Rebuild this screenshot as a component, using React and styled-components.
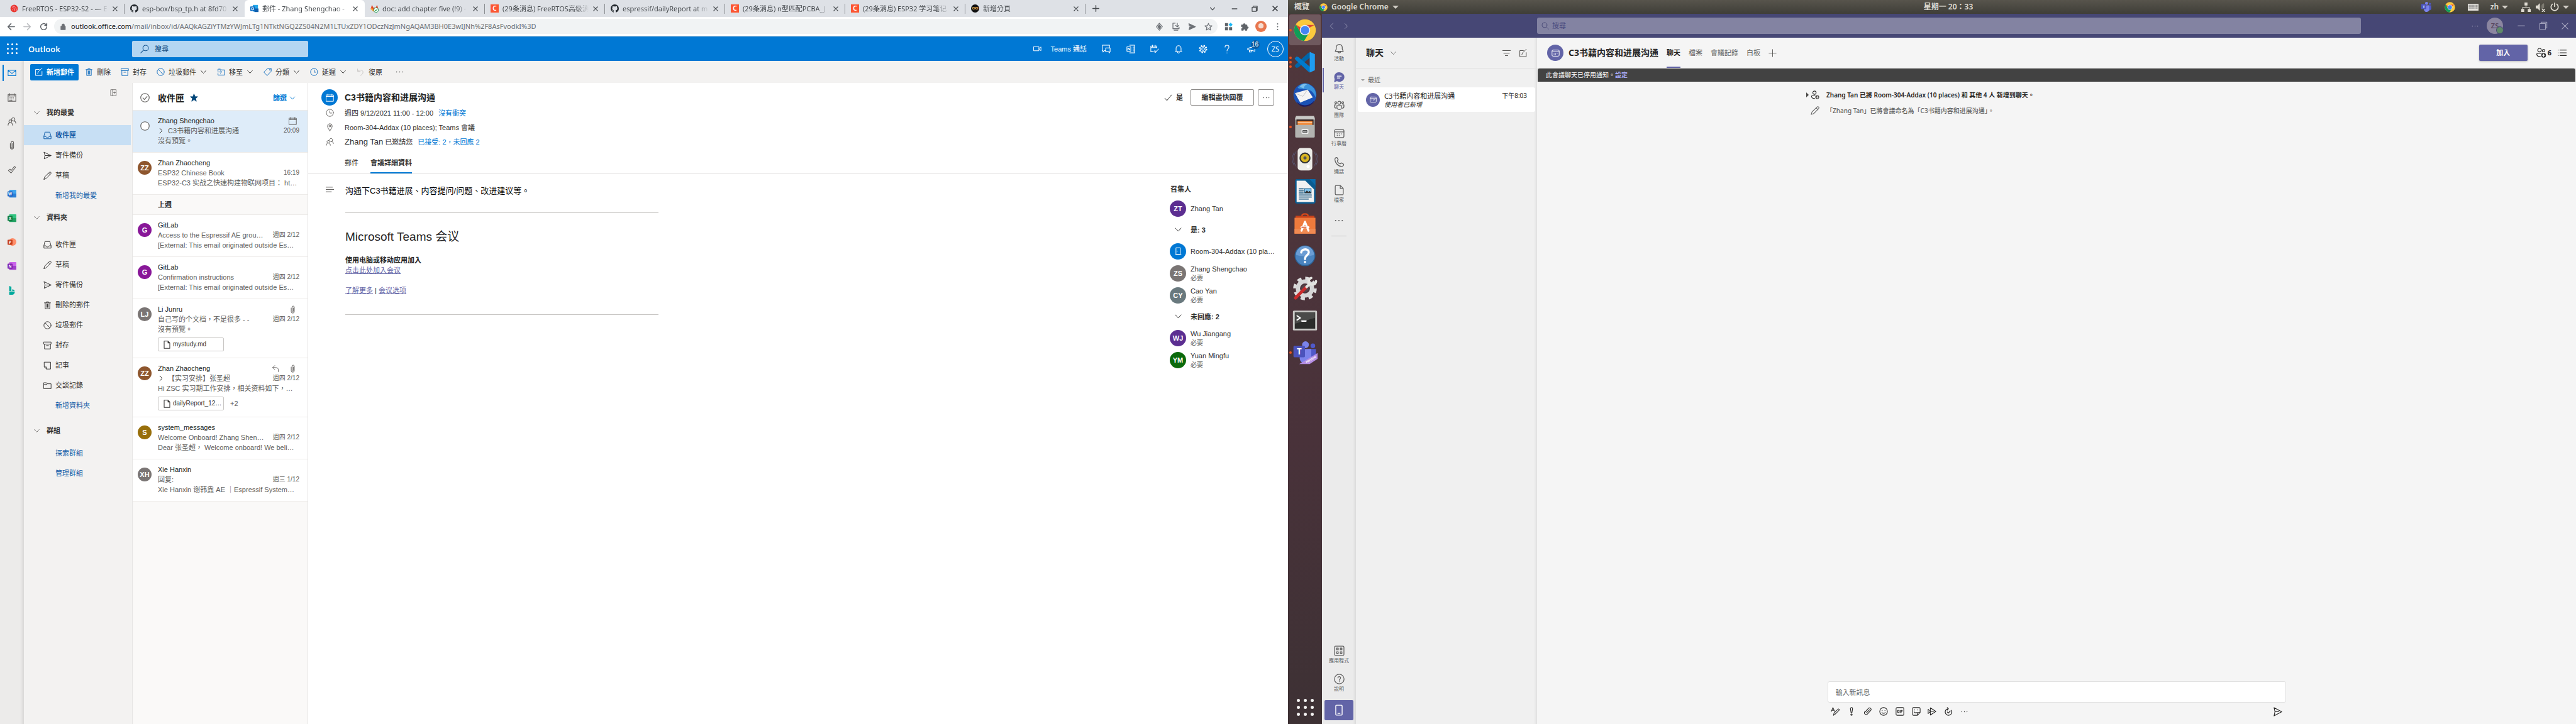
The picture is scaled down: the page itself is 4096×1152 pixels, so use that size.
import React from "react";
import styled, { createGlobalStyle, css } from "styled-components";

const segoe = '"Liberation Sans", "Noto Sans CJK TC", sans-serif';
const ubuntu = '"Noto Sans", "Noto Sans CJK TC", sans-serif';

const Global = createGlobalStyle`
  * { box-sizing: border-box; }
  body { margin: 0; background: #fff; }
  button, input { font: inherit; color: inherit; border: 0; background: none; padding: 0; margin: 0; }
  ul, h1, h2, h3, p { margin: 0; padding: 0; list-style: none; font-weight: inherit; font-size: inherit; }
  a { color: inherit; text-decoration: none; }
`;

/* ---------- icons ---------- */

const Svg = styled.svg`
  width: ${(p) => p.$s || 13}px;
  height: ${(p) => p.$s || 13}px;
  flex: none;
  display: block;
  fill: none;
  stroke: currentColor;
  stroke-width: ${(p) => p.$w || 1.2};
  stroke-linecap: round;
  stroke-linejoin: round;
  color: ${(p) => p.$c || "inherit"};
`;

const shapes = {
  mail: <path d="M1 3h14v10H1zM1 3.5l7 5.5 7-5.5" />,
  calendar: <path d="M1 2.5h14v12.5H1zM1 5.5h14M4 1v3M12 1v3M4 8h1M7 8h1M10 8h1M4 10.5h1M7 10.5h1M10 10.5h1M4 13h1M7 13h1" />,
  cal: <path d="M1 2.5h14V15H1zM1 5.5h14M4 1v3M12 1v3" />,
  people: <path d="M10.5 7.5a3 3 0 1 0-.1 0c2.500 0 4.600 1.500 4.600 4M5 10.500a2.500 2.500 0 1 0-.1 0C2.500 10.500 1 12.500 1 15M5 10.500c2.500 0 4 2 4 4.500" />,
  clip: <path d="M5 5v7a3 3 0 0 0 6 0V3.500a2.200 2.200 0 0 0-4.400 0V11.500a1.200 1.200 0 0 0 2.400 0V5" />,
  todo: <path d="M1.500 9.500l3-2.500 2 2.500L12.500 2l2 1.500L6.500 14z" />,
  collapse: <path d="M2 1h12v14H2zM6 1v14M8 8h5M10 6v4" />,
  chevron: <path d="M2.500 5l5.500 6 5.500-6" />,
  next: <path d="M5 2l6 6-6 6" />,
  prev: <path d="M11 1.500L4.500 8l6.500 6.500" />,
  inbox: <path d="M3.500 1.500h9L15 10v4.500H1V10zM1 10h4c0 3 6 3 6 0h4" />,
  sent: <path d="M1.500 1.500L15 8 1.500 14.500 3 8zM3 8h12" />,
  pencil: <path d="M1 15l1.500-4.500L11.500 1.500a1.800 1.800 0 0 1 3 2.800L5.500 13.500zM10 3l3 3" />,
  trash: <path d="M3.500 3.500V15h9V3.500M2 3.500h12M6 3.500V1.500h4v2M6.500 6v6.500M9.500 6v6.500M8 6v6.500" />,
  junk: <><circle cx="8" cy="8" r="7" /><path d="M3.200 3l9.600 10" /></>,
  archive: <path d="M1 1.500h14v4H1zM2.200 5.500V15h11.600V5.500M6 8.500h4" />,
  note: <path d="M2 1.500h12V15H6L2 11zM2 11h4v4" />,
  folder: <path d="M1 2.500h5l1.500 2H15V14H1zM1 6h5.500l1-1.500" />,
  compose: <path d="M14.500 7v8H2V3h7M6 11l1-3 7.500-7.500" />,
  move: <path d="M5 2.500H2v3M2 11v3h13V4H8.500L7 2.500H5M1 8h8M6.500 5.500L9 8l-2.500 2.500" />,
  tag: <><path d="M8.500 1H15v5.500L7 15 1 8.800z" /><circle cx="12.200" cy="3.800" r=".7" /></>,
  clock: <><circle cx="8" cy="8" r="7" /><path d="M8 4v4.500h3.500" /></>,
  undo: <path d="M2 2v5h5M2.500 6.500C6 3 12 3.500 12.500 8c.300 3-2 5-4.500 7" />,
  reply: <path d="M6 2L2 6l4 4M2 6h6c4 0 6 3 5 8" />,
  dots: <path strokeWidth="2" d="M2 8h.01M8 8h.01M14 8h.01" />,
  vdots: <path strokeWidth="2.400" d="M8 2.500v.01M8 8v.01M8 13.500v.01" />,
  check: <path d="M1.500 9l4 4.500L14.500 2.500" />,
  checkCircle: <><circle cx="8" cy="8" r="7.200" /><path d="M4.500 8.500l2.500 2.500 4.500-5" /></>,
  circle: <circle cx="8" cy="8" r="7.200" fill="#fff" />,
  star: <path fill="currentColor" d="M8 1l2 5h5l-4 3.300L12.500 15 8 11.500 3.500 15 5 9.300 1 6h5z" />,
  starLine: <path d="M8 1.500l1.900 4.600 4.900.3-3.800 3.200 1.200 4.900L8 11.900l-4.200 2.600L5 9.600 1.200 6.400l4.900-.3z" />,
  pin: <><path d="M8 15C5 10.500 3.500 8.500 3.500 5.500a4.500 4.500 0 0 1 9 0C12.500 8.500 11 10.500 8 15z" /><circle cx="8" cy="5.500" r="1.800" /></>,
  lines: <path d="M0 3.500h13M0 8h16M0 12.500h11" />,
  search: <><circle cx="9.800" cy="6.200" r="5" /><path d="M6.200 9.800L1 15" /></>,
  searchR: <><circle cx="6.500" cy="6.500" r="5.300" /><path d="M10.500 10.500L15 15" /></>,
  video: <path d="M1 4h10v8H1zM11 8l4-3.500v7z" />,
  chat: <path d="M7 11H4.500L2 13.500V11H1V1h13v4M7 6h8v7h-1v2l-2-2H7z" />,
  onenote: <path d="M6 1h9v14H6M1 4h7v8H1zM3 10V6l3 4V6M15 4.500h-3M15 8h-3M15 11.500h-3" />,
  calCheck: <path d="M12 6V2.500H1V13h4M1 5.500h11M4 1v3M9 1v3M6.500 12l2.500 2.500L15 8M8 10.500l1.500 1.500" />,
  bell: <path d="M2 12.500h12M3.500 12.500V6.500a4.500 4.500 0 0 1 9 0v6M6.500 12.500a1.500 1.500 0 0 0 3 2" />,
  gear: <><circle cx="8" cy="8" r="2.500" /><circle cx="8" cy="8" r="5" /><circle cx="8" cy="8" r="6.500" strokeDasharray="2.600 2.500" strokeWidth="2" strokeLinecap="butt" /></>,
  question: <path d="M4.500 4.500C4.500 0 11.500 0 11.500 4.500 11.500 7.500 8 7.500 8 11.500M8 15v.01" />,
  megaphone: <path d="M1 7l13-4v9L1 9zM4 10v3.500h3.500V11" />,
  door: <><path d="M4 1.500h8v13H4zM2.500 14.500h11" /><path d="M6 8v.5" /></>,
  file: <path d="M2.500 1H10l3.500 3.500V15h-11zM10 1v3.500h3.500" />,
  back: <path d="M15 8H2M8 2L2 8l6 6" />,
  forward: <path d="M1 8h13M8 2l6 6-6 6" />,
  reload: <path d="M14 8A6 6 0 1 1 12 3.500L14 5.500M14 1.500v4h-4" />,
  lock: <path fill="currentColor" d="M3 7h10v8H3zM5 7V4.500a3 3 0 0 1 6 0V7" />,
  close: <path d="M3 3l10 10M13 3L3 13" />,
  plus: <path d="M8 1v14M1 8h14" />,
  minus: <path d="M2 8h12" />,
  restore: <path d="M1.500 4h10.500v10.500H1.500zM4 4V1.500h10.500V12H12" />,
  eye: <><path d="M8 1l6 7-6 7-6-7z" /><path fill="currentColor" d="M8 4l3 4-3 4-3-4z" /></>,
  install: <path d="M7 1H2.500v11h12V9M5 15h7M11 1v7M8 5.500L11 8.500l3-3" />,
  plane: <path fill="currentColor" d="M2 2l13 6-13 6 1-5 6-1-6-1z" />,
  puzzle: <path fill="currentColor" d="M1.500 4.500h3.500C4 1 9 1 8.500 4.500H12V8c3.500-.8 3.500 4 0 3.500V15H8.500c0-3-3.500-3-3.500 0H1.500v-3.500c3 0 3-3.500 0-3.500z" />,
  tbell: <path d="M2 12h12L12.500 8.500V6a4.500 4.500 0 0 0-9 0v2.500zM6 12.200a2 2 0 0 0 4 0" />,
  tchat: <><path fill="currentColor" d="M8 1.500a7 6.500 0 1 1-3.500 12.100L1 15l.8-4A6.500 6.500 0 0 1 8 1.500z" /><path stroke="#fff" d="M5 6.800h6M5 9.500h4" /></>,
  teams: <><circle cx="8" cy="4.300" r="2.300" /><circle cx="2.800" cy="4" r="1.400" /><circle cx="13.200" cy="4" r="1.400" /><path d="M4.500 8.500h7V11a3.500 3.500 0 0 1-7 0zM2.800 7.500H1V10a2.500 2.500 0 0 0 2.200 2.400M13.200 7.500H15V10a2.500 2.500 0 0 1-2.200 2.400" /></>,
  tcal: <><rect x="1" y="2" width="14" height="12" rx="2" /><path d="M1 5.500h14" /><path strokeWidth="1.500" d="M5 8.500h.01M8 8.500h.01M11 8.500h.01M5 11h.01M8 11h.01" /></>,
  phone: <path d="M4.500 1.500L6.500 5 5 6.500c.5 2 2.500 4 4.500 4.500L11 9.500l3.500 2c.5 1.500-1 3.500-3 3.500C6 14.500 1.500 9 1.500 4.500c0-2 1.500-3.300 3-3z" />,
  tfile: <path d="M4 1h5.500L14 5.500V13.500a1.500 1.500 0 0 1-1.500 1.500h-9A1.500 1.500 0 0 1 2 13.500v-11A1.500 1.500 0 0 1 3.500 1zM9.500 1v4.500H14" />,
  apps: <><rect x="1" y="1" width="14" height="14" rx="1.500" /><path d="M4 4h2.500v2.500H4zM9.500 4H12v2.500H9.500zM4 9.500h2.500V12H4zM9.500 9.500H12V12H9.500z" /></>,
  help: <><circle cx="8" cy="8" r="7.200" /><path d="M6 6.300C6 3.500 10.200 3.800 10 6.300 9.900 8 8 8 8 9.800M8 12v.01" /></>,
  mobile: <><rect x="3.500" y="1" width="9" height="14" rx="1" /><path d="M6.500 12.500h3" /></>,
  filter: <path d="M0 3h16M2.500 8h11M5.500 13h5" />,
  addPerson: <><circle cx="7" cy="4" r="3" /><path d="M8 9.500H2.500C1 9.500 1 15 7.500 14.500" /><circle cx="12" cy="12" r="3.500" fill="#484644" stroke="none" /><path stroke="#fff" d="M12 10.200v3.600M10.200 12h3.600" /></>,
  addPeople: <><circle cx="5" cy="3.800" r="2.800" /><circle cx="11.500" cy="4.500" r="2" /><path d="M8 9H1.500C0 9 0 14.500 6.500 14" /><circle cx="11.500" cy="12" r="3.800" fill="#333" stroke="none" /><path stroke="#fff" d="M11.500 10v4M9.500 12h4" /></>,
  list: <path d="M1 3h.01M1 8h.01M1 13h.01M4 3h12M4 8h12M4 13h12" />,
  format: <path d="M1 8L4 1l3 7M2 6h4M5 15l1-4 7-7a1.400 1.400 0 0 1 2 2l-7 7z" />,
  bang: <><path d="M6 3a2 2 0 0 1 4 0L8.800 10.500H7.200z" /><circle cx="8" cy="13.800" r="1.300" /></>,
  attach: <path d="M3 9l6-6.500a2.800 2.800 0 0 1 4 4L7 13a3.200 3.200 0 0 1-4.500-4.500M5.500 10.500L11 5" />,
  smile: <><circle cx="8" cy="8" r="7" /><path d="M5.500 6v.5M10.500 6v.5M5 10c1.500 2 4.500 2 6 0" /></>,
  gif: <><rect x="1" y="1" width="14" height="14" rx="2" /><path d="M6 6H4v4h2V8M8.200 6v4M10.200 10V6h2.300M10.200 8h2" /></>,
  sticker: <path d="M3 1h10a2 2 0 0 1 2 2v7l-5 5H3a2 2 0 0 1-2-2V3a2 2 0 0 1 2-2zM10 15v-5h5M5 5v.5M10.500 5v.5M4.500 9c1 1.500 3 1.800 4.500 1" />,
  stream: <path d="M5 1.500L15 8 5 14.500V8zM1 4l4 4-4 4zM5 8h6" />,
  loop: <path strokeWidth="1.400" d="M8 3a6 6 0 1 0 5.500 3M8 3l-2-2M8 3L6 5.500M6 9l2 2 3.500-4" />,
  sendT: <path d="M2 1l13 7-13 7 1.500-7zM3.500 8H10" />,
};

const Icon = ({ name, size, color, weight }) => (
  <Svg viewBox="0 0 16 16" $s={size} $c={color} $w={weight} aria-hidden="true">{shapes[name]}</Svg>
);

const ChromeLogo = ({ size }) => (
  <Svg viewBox="0 0 48 48" $s={size} style={{ stroke: "none" }}>
    <circle cx="24" cy="24" r="23" fill="#fbc93d" />
    <path fill="#da4437" d="M24 24L4.500 12A23 23 0 0 1 44.200 13z M24 13h20.200A23 23 0 0 0 4.500 12l10 17z" />
    <path fill="#109d58" d="M4.500 12A23 23 0 0 0 22 47L33 29 14.500 29z" />
    <circle cx="24" cy="24" r="11" fill="#f1f1f1" />
    <circle cx="24" cy="24" r="9" fill="#4385f4" />
  </Svg>
);

const TeamsLogo = ({ size, preview }) => (
  <Svg viewBox="0 0 48 48" $s={size} style={{ stroke: "none" }}>
    <circle cx="25" cy="9" r="6.500" fill="#7b83eb" />
    <circle cx="39" cy="11" r="4.500" fill="#5059c9" />
    <path fill="#5059c9" d="M30 17h15v14a8 8 0 0 1-13 6z" />
    <path fill="#7b83eb" d="M14 17h22v16a11 11 0 0 1-22 3z" />
    <rect x="2" y="11" width="22" height="22" rx="2" fill="#4b53bc" />
    <text x="13" y="28" fontSize="16" fontWeight="bold" textAnchor="middle" fill="#fff" fontFamily="Noto Sans">T</text>
    {preview && <path fill="#b48ee3" d="M13 46L48 25v11L33 46z" />}
    {preview && <text transform="translate(27 44.500) rotate(-31)" fontSize="5" fontWeight="bold" fill="#fff" fontFamily="Noto Sans">PREVIEW</text>}
  </Svg>
);

const dockArt = {
  chrome: <ChromeLogo size={36} />,
  vscode: (
    <Svg viewBox="0 0 48 48" $s={36} style={{ stroke: "none" }}>
      <path fill="#0065a9" d="M34 3l-4 2L4 29l-2 3 4 4 4-1 26-22z" />
      <path fill="#007acc" d="M34 45l-4-2L4 19l-2-3 4-4 4 1 26 22z" />
      <path fill="#1f9cf0" d="M34 2l11 5v34l-11 5z" />
    </Svg>
  ),
  thunderbird: (
    <Svg viewBox="0 0 48 48" $s={40} style={{ stroke: "none" }}>
      <circle cx="24" cy="25" r="22" fill="#1b52b5" />
      <path fill="#1f1c5e" d="M8 38c8 8 22 11 34-2-4 12-26 18-34 2z" />
      <path fill="#f4f4f4" d="M5 22l24-7 10 15-24 10z" />
      <path fill="none" stroke="#bbb" strokeWidth="1" d="M5 22l15 6 9-13" />
      <path fill="#3b93dc" d="M10 12C14 3 28 0 36 8c8 5 10 14 8 22-3-9-8-14-16-15-5-1-10 0-18-3z" />
      <path fill="#7cc0ec" d="M14 10c3-5 9-7 14-5-4 1-6 4-6 8z" />
    </Svg>
  ),
  files: (
    <Svg viewBox="0 0 48 48" $s={38} style={{ stroke: "none" }}>
      <rect x="4" y="4" width="40" height="41" rx="2" fill="#8b8b88" />
      <path fill="#c9c9c6" d="M6 2h36l2 7H4z" />
      <rect x="7" y="9" width="34" height="12" fill="#322" />
      <path fill="#f08b3c" d="M9 12h30v9H9z" />
      <path stroke="#fff" strokeWidth="1" d="M10 15h28" />
      <rect x="5" y="20" width="38" height="25" rx="1" fill="#b3b3b0" />
      <rect x="17" y="28" width="14" height="10" rx="2" fill="#eee" />
      <rect x="20" y="31" width="8" height="4" fill="#999" stroke="#444" />
    </Svg>
  ),
  music: (
    <Svg viewBox="0 0 48 48" $s={40} style={{ stroke: "none" }}>
      <g fill="none" stroke="#5a5f80" strokeWidth="1">
        <path d="M7 10a22 22 0 0 0 0 28M3 12a24 24 0 0 0 0 24M41 10a22 22 0 0 1 0 28M45 12a24 24 0 0 1 0 24" />
      </g>
      <rect x="10" y="3" width="28" height="43" rx="6" fill="#ecece8" />
      <circle cx="24" cy="22" r="10.500" fill="#333" />
      <circle cx="24" cy="22" r="8" fill="#d9b521" />
      <circle cx="24" cy="22" r="3" fill="#555" />
      <circle cx="30" cy="38" r="3" fill="#fff" />
    </Svg>
  ),
  writer: (
    <Svg viewBox="0 0 48 48" $s={39} style={{ stroke: "none" }}>
      <path fill="#0a5c91" d="M6 0h26l12 13v31a4 4 0 0 1-4 4H8a4 4 0 0 1-4-4V3z" />
      <path fill="#f2f2f2" d="M7 3h17l17 17v25H7z" />
      <path fill="#0a6cab" d="M32 0h12v13z" />
      <path stroke="#0b4d78" strokeWidth="2" d="M12 19h8M12 23h8M12 27h8M12 31h24M12 35h24M12 39h18" />
      <path fill="#0b4d78" d="M22 18h14v10H22z" />
      <path fill="#7ec4ee" d="M23 19h12v6H23z" />
      <path fill="#333" d="M23 27l4-5 3 3 3-2 2 4z" />
    </Svg>
  ),
  software: (
    <Svg viewBox="0 0 48 48" $s={38} style={{ stroke: "none" }}>
      <path fill="none" stroke="#d4481a" strokeWidth="3" d="M18 16V8c0-5 12-5 12 0v8" />
      <path fill="#c8421a" d="M5 8h38v6H5z" />
      <path fill="#ef7a3c" d="M3 12h42v32H3z" />
      <path fill="#f08a52" d="M3 34h42v10H3z" />
      <path stroke="#fff" strokeWidth="4" d="M17 38l7-18 7 18" fill="none" />
      <rect x="15" y="29" width="18" height="4" rx="2" fill="#fff" />
      <rect x="17" y="30" width="10" height="2" fill="#d4481a" />
    </Svg>
  ),
  help: (
    <Svg viewBox="0 0 48 48" $s={36} style={{ stroke: "none" }}>
      <circle cx="24" cy="24" r="21" fill="#4a84bf" stroke="#2c5f90" strokeWidth="2" />
      <path fill="#6b9dd4" d="M5 22a19 19 0 0 1 38 0c-12 4-26 4-38 0z" />
      <path fill="none" stroke="#fff" strokeWidth="4.500" d="M16 17c1-9 17-9 16 0-.5 6-8 6-8 14M24 37v.5" />
    </Svg>
  ),
  settings: (
    <Svg viewBox="0 0 48 48" $s={40} style={{ stroke: "none" }}>
      <circle cx="24" cy="24" r="19.500" fill="none" stroke="#ddd" strokeWidth="6" strokeDasharray="8 7.300" strokeLinecap="butt" />
      <circle cx="24" cy="24" r="13.500" fill="none" stroke="#d6d6d6" strokeWidth="8" />
      <circle cx="24" cy="24" r="7" fill="#574549" />
      <path stroke="#c92c2c" strokeWidth="6" d="M6 42L26 22" />
      <path stroke="#e4e4e0" strokeWidth="5" d="M27 21l6-6" />
      <path fill="none" stroke="#e4e4e0" strokeWidth="4.500" d="M36 4c-6 2-7 10-1 12 5 2 10-1 10-6" />
    </Svg>
  ),
  terminal: (
    <Svg viewBox="0 0 48 48" $s={40} style={{ stroke: "none" }}>
      <rect x="1" y="5" width="46" height="38" rx="2" fill="#c8c8c5" />
      <rect x="4.500" y="8.500" width="39" height="31" fill="#2b2c2a" />
      <path fill="#4a4b49" d="M5 9h38v10L5 30z" />
      <path fill="none" stroke="#fff" strokeWidth="2.500" d="M9 15l6 4-6 4M18 25h8" />
    </Svg>
  ),
  teams: <TeamsLogo size={40} preview />,
};

/* ---------- desktop ---------- */

const Desktop = styled.div`
  display: grid;
  grid-template-columns: 1fr 1fr;
  min-height: 100vh;
  font-family: ${segoe};
`;
const Column = styled.div`
  display: flex;
  flex-direction: column;
  min-width: 0;
`;
const Row = styled.div`
  display: flex;
  align-items: ${(p) => p.$align || "center"};
  gap: ${(p) => p.$gap || 0}px;
`;
const Spacer = styled.div`
  flex: 1;
`;
const Disc = styled.span`
  display: flex;
  flex: none;
  align-items: center;
  justify-content: center;
  width: ${(p) => p.$d}px;
  height: ${(p) => p.$d}px;
  border-radius: 50%;
  background: ${(p) => p.$bg};
  color: #fff;
  font-weight: 700;
  font-size: 11px;
  line-height: 16px;
`;

/* ---------- browser ---------- */

const TabStrip = styled.div`
  display: flex;
  align-items: center;
  height: 27px;
  padding: 0 5px 0 7px;
  background: #dee1e6;
  font: 11px/16px ${ubuntu};
  color: #45494d;
`;
const Tab = styled.div`
  display: flex;
  align-items: center;
  align-self: stretch;
  gap: 6px;
  width: 191px;
  padding: 0 10px 0 9px;
  position: relative;
  ${(p) =>
    p.$active
      ? css`background: #fff; border-radius: 6px 6px 0 0;`
      : css`
          &::after {
            content: "";
            position: absolute;
            right: 0;
            top: 6px;
            height: 16px;
            width: 1px;
            background: ${p.$plain ? "transparent" : "#8a8d91"};
          }
        `}
`;
const TabTitle = styled.span`
  flex: 1;
  overflow: hidden;
  white-space: nowrap;
  mask-image: linear-gradient(90deg, #000 85%, transparent);
`;
const Favicon = styled.span`
  display: flex;
  flex: none;
  align-items: center;
  justify-content: center;
  width: 13px;
  height: 13px;
  border-radius: ${(p) => p.$r || 0}px;
  background: ${(p) => p.$bg || "none"};
  color: ${(p) => p.$ink || "#fff"};
  font-size: 10px;
  line-height: 13px;
  font-weight: 600;
`;
const IconButton = styled.button`
  display: flex;
  flex: none;
  align-items: center;
  justify-content: center;
  width: ${(p) => p.$w || 26}px;
  height: 24px;
`;
const AddressBar = styled.div`
  display: flex;
  align-items: center;
  height: 31px;
  padding: 0 4px;
  border-bottom: 1px solid #d8dadd;
  background: #fff;
  color: #5f6368;
`;
const UrlBox = styled.div`
  display: flex;
  align-items: center;
  flex: 1;
  height: 24px;
  margin: 0 4px;
  padding: 0 2px 0 9px;
  border-radius: 12px;
  background: #f1f3f4;
  font: 11px/16px ${ubuntu};
  color: #6c7075;
  white-space: nowrap;
`;
const Url = styled.a`
  flex: 1;
  margin-left: 7px;
  b { font-weight: 400; color: #202124; }
`;
const Face = styled.span`
  width: 18px;
  height: 18px;
  border-radius: 50%;
  background: radial-gradient(circle at 50% 45%, #f7ddd0 0 30%, #e8774f 34%);
  margin: 0 4px;
`;

const GithubMark = () => (
  <Svg viewBox="0 0 16 16" style={{ stroke: "none" }}>
    <path fill="#24292e" d="M8 0C3.580 0 0 3.580 0 8c0 3.540 2.290 6.530 5.470 7.590.4.070.55-.17.55-.38v-1.490c-2.230.480-2.690-.940-2.690-.940-.36-.92-.89-1.170-.89-1.170-.73-.5.050-.49.050-.49.8.060 1.230.830 1.230.830.710 1.230 1.870.870 2.330.660.070-.52.280-.87.510-1.070-1.780-.2-3.640-.89-3.640-3.950 0-.87.310-1.590.820-2.150-.08-.2-.36-1.020.080-2.120 0 0 .67-.21 2.200.820a7.600 7.600 0 0 1 4 0c1.530-1.040 2.200-.82 2.200-.82.440 1.100.160 1.920.080 2.120.510.560.820 1.270.820 2.150 0 3.070-1.870 3.750-3.650 3.950.290.250.540.730.540 1.480v2.200c0 .21.150.460.550.380A8 8 0 0 0 16 8c0-4.420-3.580-8-8-8z" />
  </Svg>
);
const GitlabMark = () => (
  <Svg viewBox="0 0 16 16" style={{ stroke: "none" }}>
    <path fill="#e24329" d="M3 1l2.500 5h5L13 1l2.500 8L8 15 .5 9z" />
    <path fill="#fca326" d="M.5 9L3 6l5 9z" />
    <circle cx="11" cy="11" r="4.500" fill="#fff" stroke="#2da160" />
    <path fill="none" stroke="#2da160" strokeWidth="1.300" d="M9 11l1.500 1.500 3-3" />
  </Svg>
);
const EspMark = () => (
  <Svg viewBox="0 0 16 16" $w={1.5} $c="#e8362d">
    <circle cx="8" cy="8" r="6.500" fill="#e8362d" />
    <path stroke="#fbd" strokeWidth="1" d="M5 3.500c4 0 7.500 3.500 7.500 8M4.500 6.500c3 0 5 2 5 5.500M5 10v1" />
  </Svg>
);
const OutlookMark = () => (
  <Svg viewBox="0 0 16 16" style={{ stroke: "none" }}>
    <path fill="#28a8ea" d="M5 1h10v13H5z" />
    <path fill="#0f5fae" d="M8 8h8v7H8z" />
    <rect x="0" y="4" width="9" height="9" rx="1" fill="#0a6cc4" />
    <circle cx="4.500" cy="8.500" r="2.300" fill="none" stroke="#fff" strokeWidth="1.300" />
  </Svg>
);

const tabs = [
  { icon: <EspMark />, title: "FreeRTOS - ESP32-S2 - — E" },
  { icon: <GithubMark />, title: "esp-box/bsp_tp.h at 8fd70", plain: true },
  { icon: <OutlookMark />, title: "郵件 - Zhang Shengchao -", active: true },
  { icon: <GitlabMark />, title: "doc: add chapter five (!9) ·" },
  { icon: <Favicon $bg="#fc5531">C</Favicon>, title: "(29条消息) FreeRTOS高级消" },
  { icon: <GithubMark />, title: "espressif/dailyReport at m" },
  { icon: <Favicon $bg="#fc5531">C</Favicon>, title: "(29条消息) n型匹配PCBA_J" },
  { icon: <Favicon $bg="#fc5531">C</Favicon>, title: "(29条消息) ESP32 学习笔记" },
  { icon: <Favicon $bg="#111" $r={7} $ink="#f0b050">∞</Favicon>, title: "新增分頁" },
];

const Browser = () => (
  <>
    <TabStrip>
      {tabs.map((t) => (
        <Tab key={t.title} $active={t.active} $plain={t.plain}>
          {t.icon}
          <TabTitle>{t.title}</TabTitle>
          <Icon name="close" size={10} weight={2.2} />
        </Tab>
      ))}
      <IconButton $w={32} aria-label="new tab"><Icon name="plus" size={11} weight={2} /></IconButton>
      <Spacer />
      <IconButton $w={38} aria-label="tab search"><Icon name="chevron" size={10} weight={2} /></IconButton>
      <IconButton $w={32} aria-label="minimize"><Icon name="minus" size={10} weight={2.4} /></IconButton>
      <IconButton $w={32} aria-label="restore"><Icon name="restore" size={10} weight={2} /></IconButton>
      <IconButton $w={32} aria-label="close"><Icon name="close" size={11} weight={2.4} /></IconButton>
    </TabStrip>
    <AddressBar>
      <IconButton aria-label="back"><Icon name="back" weight={1.8} /></IconButton>
      <IconButton aria-label="forward"><Icon name="forward" weight={1.8} color="#bbbdc0" /></IconButton>
      <IconButton aria-label="reload"><Icon name="reload" weight={1.8} /></IconButton>
      <UrlBox>
        <Icon name="lock" size={11} />
        <Url href="#mail">
          <b>outlook.office.com</b>/mail/inbox/id/AAQkAGZiYTMzYWJmLTg1NTktNGQ2ZS04N2M1LTUxZDY1ODczNzJmNgAQAM3BH0E3wIJNh%2F8AsFvodkI%3D
        </Url>
        <IconButton aria-label="view"><Icon name="eye" weight={1.4} /></IconButton>
        <IconButton aria-label="install"><Icon name="install" weight={1.6} /></IconButton>
        <IconButton aria-label="share"><Icon name="plane" /></IconButton>
        <IconButton aria-label="bookmark"><Icon name="starLine" weight={1.5} /></IconButton>
      </UrlBox>
      <IconButton aria-label="apps">
        <Svg viewBox="0 0 16 16" style={{ stroke: "none" }}>
          <path fill="#5f6368" d="M1 1h6v6H1zM1 9h6v6H1zM9 9h6v6H9z" />
          <path fill="#1cb8f5" d="M12 0l4 4-4 4-4-4z" />
        </Svg>
      </IconButton>
      <IconButton aria-label="extensions"><Icon name="puzzle" /></IconButton>
      <Face />
      <IconButton aria-label="menu"><Icon name="vdots" /></IconButton>
    </AddressBar>
  </>
);

/* ---------- outlook ---------- */

const SuiteBar = styled.header`
  display: flex;
  align-items: center;
  height: 39px;
  background: #0078d4;
  color: #fff;
  font-size: 11px;
  line-height: 16px;
`;
const Brand = styled.a`
  width: 165px;
  font: 600 13px/20px "Open Sans", sans-serif;
`;
const Waffle = styled.button`
  display: grid;
  grid-template-columns: repeat(3, 3px);
  gap: 4px;
  margin: 0 17px 0 11px;
  i { width: 3px; height: 3px; border-radius: 50%; background: currentColor; }
`;
const SearchBox = styled.label`
  display: flex;
  align-items: center;
  gap: 9px;
  width: 280px;
  height: 26px;
  padding-left: 13px;
  border-radius: 2px;
  background: #b3d6f2;
  color: #10508c;
  input { flex: 1; min-width: 0; outline: 0; }
  input::placeholder { color: #104a7d; opacity: 1; }
`;
const SuiteIcons = styled.div`
  display: grid;
  grid-template-columns: repeat(7, 1fr);
  width: 269px;
  margin-left: 12px;
`;
const SuiteButton = styled.button`
  display: flex;
  justify-content: center;
  position: relative;
`;
const Badge = styled.span`
  position: absolute;
  left: 18px;
  top: -7px;
  width: 14px;
  height: 14px;
  border-radius: 50%;
  background: #0b5a9f;
  font-size: 10px;
  line-height: 14px;
  text-align: center;
`;
const Me = styled.span`
  width: 26px;
  height: 26px;
  margin: 0 7px 0 6px;
  border: 1px solid #fff;
  border-radius: 50%;
  font: 11px/24px ${ubuntu};
  text-align: center;
`;
const Mail = styled.div`
  display: flex;
  flex: 1;
`;
const MailMain = styled(Column)`
  flex: 1;
`;
const AppRail = styled.nav`
  width: 38px;
  background: #ecebea;
  box-shadow: inset -7px 0 5px -5px rgba(0, 0, 0, 0.1);
  color: #605e5c;
`;
const AppList = styled.div`
  display: grid;
  grid-auto-rows: 1fr;
  height: 384px;
`;
const AppLink = styled.a`
  display: flex;
  align-items: center;
  justify-content: center;
  position: relative;
  ${(p) =>
    p.$active &&
    css`
      color: #0078d4;
      &::before { content: ""; position: absolute; left: 4px; top: 6px; bottom: 6px; width: 2px; background: #0078d4; }
    `}
`;
const CommandBar = styled.div`
  display: flex;
  align-items: center;
  gap: 16px;
  height: 35px;
  padding-left: 10px;
  background: #f3f2f1;
  color: #323130;
  font-size: 11px;
  line-height: 16px;
`;
const PrimaryButton = styled.button`
  display: flex;
  align-items: center;
  gap: 6px;
  height: 26px;
  width: 77px;
  padding-left: 7px;
  margin-right: -6px;
  border-radius: 2px;
  background: #0078d4;
  color: #fff;
  font-weight: 700;
`;
const Command = styled.button`
  display: flex;
  align-items: center;
  gap: 6px;
  svg:first-child { color: ${(p) => (p.$dim ? "#c8c6c4" : "#0f6cbd")}; }
`;
const Panes = styled.div`
  display: flex;
  flex: 1;
`;
const Folders = styled.nav`
  width: 172px;
  background: #f3f2f1;
  color: #323130;
  font-size: 11px;
  line-height: 16px;
`;
const CollapseRow = styled.div`
  display: flex;
  align-items: center;
  justify-content: flex-end;
  height: 31px;
  padding-right: 24px;
  color: #605e5c;
`;
const GroupHead = styled.h2`
  display: flex;
  align-items: center;
  gap: 10px;
  height: 32px;
  margin: ${(p) => p.$top || 0}px 0 ${(p) => p.$bottom || 4}px;
  padding-left: 15px;
  font-weight: 700;
  svg { color: #605e5c; }
`;
const FolderLink = styled.a`
  display: flex;
  align-items: center;
  gap: 6px;
  height: 32px;
  margin-right: 2px;
  padding-left: ${(p) => (p.$action ? 50 : 31)}px;
  color: ${(p) => (p.$action || p.$active ? "#0f5ba8" : "inherit")};
  font-weight: ${(p) => (p.$active ? 700 : 400)};
  background: ${(p) => (p.$active ? "#c7dff4" : "none")};
`;
const List = styled.section`
  width: 280px;
  border: solid #e6e5e4;
  border-width: 0 1px;
  background: #faf9f8;
  color: #605e5c;
  font-size: 11px;
  line-height: 16px;
`;
const ListHead = styled.div`
  display: flex;
  align-items: center;
  height: 44px;
  padding: 4px 19px 0 12px;
  border-bottom: 1px solid #edebe9;
  background: #fff;
  h2 { margin: 0 9px 0 13px; font-size: 14px; font-weight: 700; color: #201f1e; line-height: 20px; }
  button { display: flex; align-items: center; gap: 4px; margin-left: auto; color: #0078d4; font-weight: 700; }
`;
const DateHead = styled.h3`
  height: 32px;
  padding-left: 40px;
  border-bottom: 1px solid #edebe9;
  font-weight: 700;
  line-height: 32px;
  color: #323130;
`;
const Message = styled.li`
  display: grid;
  grid-template-columns: 40px 1fr;
  height: ${(p) => (p.$tall ? 94 : 67)}px;
  padding: 8px 13px 0 0;
  border-bottom: 1px solid #edebe9;
  background: ${(p) => (p.$active ? "#deecf9" : "#fff")};
`;
const AvatarCell = styled.div`
  display: flex;
  justify-content: center;
  width: 38px;
  padding-top: ${(p) => p.$top}px;
`;
const MessageBody = styled.div`
  min-width: 0;
`;
const Clip = styled.span`
  flex: 1;
  min-width: 0;
  overflow: hidden;
  white-space: nowrap;
  text-overflow: ellipsis;
`;
const Line = styled.div`
  display: flex;
  align-items: center;
  gap: 6px;
  height: 16px;
  padding-right: ${(p) => p.$pad || 0}px;
  ${(p) => p.$name && css`color: #201f1e;`}
  time { flex: none; font-size: 10px; white-space: nowrap; }
`;
const Files = styled.div`
  display: flex;
  align-items: center;
  gap: 10px;
  margin-top: 5px;
`;
const Chip = styled.a`
  display: flex;
  align-items: center;
  gap: 3px;
  width: 105px;
  height: 22px;
  padding: 0 1px 0 7px;
  border: 1px solid #c8c6c4;
  border-radius: 2px;
  color: #323130;
  font-size: 10px;
  white-space: nowrap;
`;
const Reading = styled.main`
  display: flex;
  flex: 1;
  flex-direction: column;
  background: #fff;
  color: #323130;
  font-size: 11px;
  line-height: 16px;
`;
const ReadHead = styled.header`
  padding: 10px 22px 0 21px;
  border-bottom: 1px solid #e5e4e3;
`;
const HeadRow = styled.div`
  display: grid;
  grid-template-columns: 26px 1fr auto;
  align-items: center;
  justify-items: start;
  column-gap: 11px;
  height: ${(p) => p.$h || 23}px;
  > svg { justify-self: center; color: #605e5c; }
  h1 { font-size: 14px; font-weight: 700; line-height: 20px; color: #201f1e; }
  a { margin-left: 5px; color: #0078d4; }
  big { font-size: 13px; }
`;
const Answer = styled.b`
  margin-right: 6px;
`;
const OutlineButton = styled.button`
  display: flex;
  align-items: center;
  justify-content: center;
  width: ${(p) => p.$w}px;
  height: 26px;
  border: 1px solid #8a8886;
  border-radius: 2px;
  font-weight: 700;
`;
const ReadTabs = styled.div`
  display: flex;
  gap: 19px;
  height: 39px;
  padding-left: 37px;
`;
const ReadTab = styled.button`
  padding-top: 6px;
  border-bottom: 2px solid ${(p) => (p.$active ? "#0078d4" : "transparent")};
  font-weight: ${(p) => (p.$active ? 700 : 400)};
`;
const ReadBody = styled.div`
  display: flex;
  flex: 1;
  padding: 14px 20px 0 28px;
`;
const BodyMark = styled.span`
  padding-top: 4px;
  color: #605e5c;
`;
const Article = styled.article`
  width: 498px;
  margin-left: 18px;
  padding-top: 3px;
  color: #252424;
  > p:first-child { font-size: 13px; line-height: 20px; color: #000; }
  hr { margin: 24px 0 0; border: 0; border-top: 1px solid #c8c6c4; }
  h2 { margin: 26px 0 17px; font-size: 19px; line-height: 24px; }
  strong { display: block; }
  a { color: #6264a7; text-decoration: underline; }
  p + p { margin-top: 16px; }
  p + hr { margin-top: 30px; }
  p:first-child + hr { margin-top: 24px; }
`;
const Attendees = styled.aside`
  width: 168px;
  margin-left: auto;
  h3 { height: 20px; margin-bottom: 3px; padding-left: 1px; font-weight: 700; line-height: 20px; }
`;
const Person = styled.div`
  display: flex;
  align-items: center;
  gap: 7px;
  height: ${(p) => (p.$head ? 33 : 35)}px;
  font-weight: ${(p) => (p.$head ? 700 : 400)};
  small { display: block; font-size: 10px; line-height: 13px; color: #605e5c; }
  div { min-width: 0; display: grid; line-height: 15px; }
`;
const Twist = styled.span`
  display: flex;
  justify-content: center;
  width: 26px;
  color: #323130;
`;

const OfficeTile = ({ letter, dark, light, round }) => (
  <Svg viewBox="0 0 16 16" $s={14} style={{ stroke: "none" }}>
    {round ? <circle cx="9" cy="8" r="7" fill={light} /> : <rect x="3" y="1" width="13" height="14" rx="1" fill={light} />}
    {!round && <path fill={dark} opacity=".5" d="M3 8h13v7H3z" />}
    <rect x="0" y="4" width="9" height="9" rx="1" fill={dark} />
    <text x="4.500" y="11" fontSize="7" fontWeight="bold" textAnchor="middle" fill="#fff" fontFamily="Noto Sans">{letter}</text>
  </Svg>
);
const Bookings = () => (
  <Svg viewBox="0 0 16 16" $s={14} style={{ stroke: "none" }}>
    <path fill="#00a99d" d="M3 0l4 1.500V9H3zM3 10h10a5 5 0 0 1-5 6H3zM8.500 6a5 5 0 0 1 4.500 3H8.500z" />
  </Svg>
);

const folderRows = [
  ["inbox", "收件匣"], ["pencil", "草稿"], ["sent", "寄件備份"], ["trash", "刪除的郵件"],
  ["junk", "垃圾郵件"], ["archive", "封存"], ["note", "記事"], ["folder", "交談記錄"],
];
const commands = [
  ["trash", "刪除"], ["archive", "封存"], ["junk", "垃圾郵件", true], ["move", "移至", true],
  ["tag", "分類", true], ["clock", "延遲", true],
];
const messages = [
  { name: "Zhang Shengchao", subject: "C3书籍内容和进展沟通", preview: "沒有預覽。", time: "20:09", active: true, thread: true, icons: ["cal"] },
  { initials: "ZZ", bg: "#8e562e", name: "Zhan Zhaocheng", subject: "ESP32 Chinese Book", preview: "ESP32-C3 实战之快速构建物联网项目： ht…", time: "16:19" },
  { head: "上週" },
  { initials: "G", bg: "#881798", name: "GitLab", subject: "Access to the Espressif AE grou…", preview: "[External: This email originated outside Es…", time: "週四 2/12" },
  { initials: "G", bg: "#881798", name: "GitLab", subject: "Confirmation instructions", preview: "[External: This email originated outside Es…", time: "週四 2/12" },
  { initials: "LJ", bg: "#7a7574", name: "Li Junru", subject: "自己写的个文档，不是很多 - -", preview: "沒有預覽。", time: "週四 2/12", icons: ["clip"], file: "mystudy.md" },
  { initials: "ZZ", bg: "#8e562e", name: "Zhan Zhaocheng", subject: "【实习安排】张圣超", preview: "Hi ZSC 实习期工作安排，相关资料如下，…", time: "週四 2/12", icons: ["reply", "clip"], thread: true, file: "dailyReport_12…", more: "+2" },
  { initials: "S", bg: "#986f0b", name: "system_messages", subject: "Welcome Onboard! Zhang Shen…", preview: "Dear 张圣超， Welcome onboard! We beli…", time: "週四 2/12" },
  { initials: "XH", bg: "#7a7574", name: "Xie Hanxin", subject: "回复:", preview: "Xie Hanxin 谢韩鑫 AE ｜Espressif System…", time: "週三 1/12" },
];
const accepted = [["ZS", "#7a7574", "Zhang Shengchao"], ["CY", "#69797e", "Cao Yan"]];
const waiting = [["WJ", "#5c2e91", "Wu Jiangang"], ["YM", "#0b6a0b", "Yuan Mingfu"]];

const PersonRow = ({ p: [initials, bg, name] }) => (
  <Person>
    <Disc $d={26} $bg={bg}>{initials}</Disc>
    <div>{name}<small>必要</small></div>
  </Person>
);

const MessageRow = ({ m }) => (
  <Message $active={m.active} $tall={m.file}>
    <AvatarCell $top={m.initials ? 5 : 9}>
      {m.initials ? <Disc $d={22} $bg={m.bg}>{m.initials}</Disc> : <Icon name="circle" size={15} color="#605e5c" />}
    </AvatarCell>
    <MessageBody>
      <Line $name $pad={4}>
        <Clip>{m.name}</Clip>
        <Row $gap={14}>{(m.icons || []).map((i) => <Icon key={i} name={i} color="#605e5c" />)}</Row>
      </Line>
      <Line>
        {m.thread && <Icon name="next" size={10} weight={1.6} color="#323130" />}
        <Clip>{m.subject}</Clip>
        <time>{m.time}</time>
      </Line>
      <Line><Clip>{m.preview}</Clip></Line>
      {m.file && (
        <Files>
          <Chip href="#file"><Icon name="file" weight={1.3} />{m.file}</Chip>
          <span>{m.more}</span>
        </Files>
      )}
    </MessageBody>
  </Message>
);

const Outlook = () => (
  <>
    <SuiteBar>
      <Waffle aria-label="apps">{[...Array(9)].map((_, i) => <i key={i} />)}</Waffle>
      <Brand href="#home">Outlook</Brand>
      <SearchBox><Icon name="search" size={14} /><input aria-label="搜尋" placeholder="搜尋" /></SearchBox>
      <Spacer />
      <Row $gap={15}><Icon name="video" /><span>Teams 通話</span></Row>
      <SuiteIcons>
        {["chat", "onenote", "calCheck", "bell", "gear", "question", "megaphone"].map((n) => (
          <SuiteButton key={n} aria-label={n}>
            <Icon name={n} size={14} />
            {n === "megaphone" && <Badge>16</Badge>}
          </SuiteButton>
        ))}
      </SuiteIcons>
      <Me>ZS</Me>
    </SuiteBar>
    <Mail>
      <AppRail>
        <AppList>
          {["mail", "calendar", "people", "clip", "todo"].map((n, i) => (
            <AppLink key={n} href={"#" + n} $active={i === 0}><Icon name={n} size={14} /></AppLink>
          ))}
          <AppLink href="#word"><OfficeTile letter="W" dark="#185abd" light="#41a5ee" /></AppLink>
          <AppLink href="#excel"><OfficeTile letter="X" dark="#107c41" light="#33c481" /></AppLink>
          <AppLink href="#ppt"><OfficeTile letter="P" dark="#c43e1c" light="#ff8f6b" round /></AppLink>
          <AppLink href="#onenote"><OfficeTile letter="N" dark="#7719aa" light="#ca64ea" /></AppLink>
          <AppLink href="#bookings"><Bookings /></AppLink>
        </AppList>
      </AppRail>
      <MailMain>
        <CommandBar>
          <PrimaryButton><Icon name="compose" />新增郵件</PrimaryButton>
          {commands.map(([icon, label, menu]) => (
            <Command key={label}><Icon name={icon} />{label}{menu && <Icon name="chevron" size={11} weight={1.4} />}</Command>
          ))}
          <Command $dim><Icon name="undo" />復原</Command>
          <IconButton $w={22} aria-label="more"><Icon name="dots" /></IconButton>
        </CommandBar>
        <Panes>
          <Folders>
            <CollapseRow><Icon name="collapse" size={11} /></CollapseRow>
            <GroupHead><Icon name="chevron" size={11} />我的最愛</GroupHead>
            <FolderLink href="#inbox" $active><Icon name="inbox" />收件匣</FolderLink>
            <FolderLink href="#sent"><Icon name="sent" />寄件備份</FolderLink>
            <FolderLink href="#drafts"><Icon name="pencil" />草稿</FolderLink>
            <FolderLink href="#add" $action>新增我的最愛</FolderLink>
            <GroupHead $top={3} $bottom={11}><Icon name="chevron" size={11} />資料夾</GroupHead>
            {folderRows.map(([icon, label]) => (
              <FolderLink key={label} href={"#" + icon}><Icon name={icon} />{label}</FolderLink>
            ))}
            <FolderLink href="#new" $action>新增資料夾</FolderLink>
            <GroupHead $top={8}><Icon name="chevron" size={11} />群組</GroupHead>
            <FolderLink href="#find" $action>探索群組</FolderLink>
            <FolderLink href="#manage" $action>管理群組</FolderLink>
          </Folders>
          <List>
            <ListHead>
              <Icon name="checkCircle" size={15} />
              <h2>收件匣</h2>
              <Icon name="star" color="#004578" />
              <button>篩選<Icon name="chevron" size={10} weight={1.4} /></button>
            </ListHead>
            <ul>
              {messages.map((m, i) => (m.head ? <li key={i}><DateHead>{m.head}</DateHead></li> : <MessageRow key={i} m={m} />))}
            </ul>
          </List>
          <Reading>
            <ReadHead>
              <HeadRow $h={26}>
                <Disc $d={26} $bg="#0078d4"><Icon name="cal" /></Disc>
                <h1>C3书籍内容和进展沟通</h1>
                <Row $gap={6}>
                  <Icon name="check" />
                  <Answer>是</Answer>
                  <OutlineButton $w={101}>編輯盡快回覆</OutlineButton>
                  <OutlineButton $w={26} aria-label="more"><Icon name="dots" size={11} /></OutlineButton>
                </Row>
              </HeadRow>
              <HeadRow><Icon name="clock" /><p>週四 9/12/2021 11:00 - 12:00 <a href="#conflict">沒有衝突</a></p></HeadRow>
              <HeadRow><Icon name="pin" /><p>Room-304-Addax (10 places); Teams 會議</p></HeadRow>
              <HeadRow><Icon name="people" /><p><big>Zhang Tan</big> 已邀請您 <a href="#answers">已接受: 2，未回應 2</a></p></HeadRow>
              <ReadTabs>
                <ReadTab>郵件</ReadTab>
                <ReadTab $active>會議詳細資料</ReadTab>
              </ReadTabs>
            </ReadHead>
            <ReadBody>
              <BodyMark><Icon name="lines" /></BodyMark>
              <Article>
                <p>沟通下C3书籍进展、内容提问/问题、改进建议等。</p>
                <hr />
                <h2>Microsoft Teams 会议</h2>
                <p><strong>使用电脑或移动应用加入</strong><a href="#join">点击此处加入会议</a></p>
                <p><a href="#more">了解更多</a> | <a href="#options">会议选项</a></p>
                <hr />
              </Article>
              <Attendees>
                <h3>召集人</h3>
                <Person><Disc $d={26} $bg="#5c2e91">ZT</Disc>Zhang Tan</Person>
                <Person $head><Twist><Icon name="chevron" size={13} /></Twist>是: 3</Person>
                <Person><Disc $d={26} $bg="#0078d4"><Icon name="door" /></Disc><Clip>Room-304-Addax (10 pla…</Clip></Person>
                {accepted.map((p) => <PersonRow key={p[0]} p={p} />)}
                <Person $head><Twist><Icon name="chevron" size={13} /></Twist>未回應: 2</Person>
                {waiting.map((p) => <PersonRow key={p[0]} p={p} />)}
              </Attendees>
            </ReadBody>
          </Reading>
        </Panes>
      </MailMain>
    </Mail>
  </>
);

/* ---------- top panel and dock ---------- */

const Panel = styled.div`
  display: grid;
  grid-template-columns: 1fr auto 1fr;
  align-items: center;
  height: 22px;
  padding: 0 10px;
  background: linear-gradient(#57544c, #3f3e38);
  color: #dfdbd2;
  font: 600 12px/18px ${ubuntu};
`;
const Overview = styled.span`
  margin-right: 10px;
`;
const Caret = styled.span`
  border: solid transparent;
  border-width: ${(p) => p.$s || 5}px ${(p) => p.$s || 5}px 0;
  border-top-color: ${(p) => (p.$s ? "#a0a0a0" : "#d0ccc4")};
`;
const Clock = styled.time`
  padding-left: 52px;
`;
const Tray = styled.div`
  display: grid;
  grid-template-columns: 24px 50px 24px 60px 24px 22px 24px 12px;
  justify-content: end;
  align-items: center;
  justify-items: center;
`;
const Workspace = styled.div`
  display: flex;
  flex: 1;
`;
const Dock = styled.nav`
  display: flex;
  flex-direction: column;
  justify-content: space-between;
  align-items: center;
  width: 54px;
  padding-bottom: 13px;
  background: linear-gradient(#50373c, #49323a 60%, #3d3134);
`;
const DockList = styled.div`
  display: grid;
  grid-auto-rows: 1fr;
  width: 100%;
  height: 565px;
`;
const DockItem = styled.button`
  display: flex;
  align-items: center;
  justify-content: center;
  position: relative;
  margin: 1px 2px;
  border-radius: 3px;
  background: ${(p) => (p.$active ? "#6f595e" : "none")};
`;
const Pips = styled.span`
  position: absolute;
  left: 0;
  top: 0;
  bottom: 0;
  display: flex;
  flex-direction: column;
  justify-content: center;
  gap: 3px;
  i { width: 4px; height: 4px; border-radius: 50%; background: #e95420; }
`;
const AppsGrid = styled.button`
  display: grid;
  grid-template-columns: repeat(3, 5px);
  gap: 6px;
  i { width: 5px; height: 5px; border-radius: 50%; background: #f2f1f0; }
`;
const dock = [
  ["chrome", 1, true], ["vscode", 3], ["thunderbird", 0], ["files", 1], ["music", 0], ["writer", 0],
  ["software", 0], ["help", 0], ["settings", 0], ["terminal", 0], ["teams", 1],
];

/* ---------- teams ---------- */

const TeamsApp = styled.div`
  display: flex;
  flex: 1;
  flex-direction: column;
  background: #f5f5f5;
  color: #252423;
  font: 11px/16px ${ubuntu};
`;
const TeamsBody = styled.div`
  display: flex;
  flex: 1;
`;
const TeamsBar = styled.header`
  display: flex;
  align-items: center;
  height: 38px;
  background: #464775;
  color: #a3a3bd;
`;
const Arrows = styled.div`
  display: flex;
  width: 342px;
  padding-left: 4px;
`;
const TeamsSearch = styled.label`
  display: flex;
  align-items: center;
  gap: 5px;
  flex: 1;
  height: 26px;
  padding-left: 7px;
  border-radius: 3px;
  background: #8383a2;
  color: #464775;
  input { flex: 1; outline: 0; }
  input::placeholder { color: #4b4c80; opacity: 1; }
`;
const WindowTools = styled.div`
  display: flex;
  align-items: center;
  justify-content: flex-end;
  width: 342px;
`;
const Status = styled.span`
  position: relative;
  display: flex;
  align-items: center;
  justify-content: center;
  width: 26px;
  height: 26px;
  margin: 0 11px 0 6px;
  border-radius: 50%;
  background: #8b86a0;
  color: #58465e;
  font-weight: 600;
  &::after {
    content: "";
    position: absolute;
    right: -1px;
    bottom: 0;
    width: 10px;
    height: 10px;
    border: 1px solid #464775;
    border-radius: 50%;
    background: #5f8a68;
  }
`;
const TeamsRail = styled.nav`
  display: flex;
  flex-direction: column;
  align-items: center;
  width: 54px;
  padding: 9px 0 6px;
  background: #ebebeb;
  box-shadow: inset -6px 0 5px -5px rgba(0, 0, 0, 0.1);
  color: #616161;
`;
const RailItem = styled.a`
  display: flex;
  flex-direction: column;
  align-items: center;
  position: relative;
  width: 100%;
  height: ${(p) => p.$h || 45}px;
  font-size: 8px;
  line-height: 14px;
  ${(p) =>
    p.$active &&
    css`
      color: #6264a7;
      &::before { content: ""; position: absolute; left: 1px; top: -6px; height: 39px; width: 2px; background: #6264a7; }
    `}
`;
const RailRule = styled.hr`
  width: 24px;
  margin: 0;
  border: 0;
  border-top: 1px solid #c8c8c8;
`;
const PhoneButton = styled.button`
  display: flex;
  align-items: center;
  justify-content: center;
  width: 46px;
  height: 32px;
  border-radius: 2px;
  background: #6264a7;
  color: #fff;
`;
const ChatList = styled.section`
  width: 288px;
  background: #f0f0f0;
  box-shadow: inset -6px 0 5px -5px rgba(0, 0, 0, 0.1);
  font-size: 10px;
  h2 { margin-right: 10px; font-size: 14px; font-weight: 700; line-height: 20px; }
`;
const ChatHead = styled.div`
  display: flex;
  align-items: center;
  height: 49px;
  padding: 0 16px;
  border-bottom: 1px solid #e1e1e1;
`;
const Recent = styled.div`
  display: flex;
  align-items: center;
  gap: 5px;
  height: 30px;
  padding: 6px 0 0 8px;
  color: #616161;
`;
const ChatCard = styled.a`
  display: flex;
  align-items: center;
  gap: 7px;
  height: 39px;
  margin: 0 3px;
  padding: 0 13px 0 13px;
  border-radius: 3px;
  background: #fff;
  h3 { font-size: 11px; line-height: 14px; }
  p { font-style: italic; line-height: 12px; }
  time { align-self: flex-start; margin-left: auto; padding-top: 5px; }
`;
const Chat = styled.main`
  display: flex;
  flex: 1;
  flex-direction: column;
`;
const ChatBar = styled.div`
  display: flex;
  align-items: center;
  height: 49px;
  padding: 0 15px 0 16px;
  border-bottom: 1px solid #e1e1e1;
  h1 { margin: 0 13px 0 8px; font-size: 14px; font-weight: 700; line-height: 20px; }
  b { margin: 0 10px 0 2px; }
`;
const ChatTab = styled.button`
  height: 100%;
  margin-right: 13px;
  padding-top: 2px;
  border-bottom: 2px solid ${(p) => (p.$active ? "#6264a7" : "transparent")};
  color: ${(p) => (p.$active ? "#252423" : "#616161")};
  font-weight: ${(p) => (p.$active ? 700 : 400)};
`;
const JoinButton = styled.button`
  width: 77px;
  height: 26px;
  margin: 0 14px 0 auto;
  border-radius: 2px;
  background: #6264a7;
  box-shadow: 0 1px 3px rgba(0, 0, 0, 0.25);
  color: #fff;
  font-weight: 700;
`;
const Notice = styled.div`
  height: 21px;
  margin: 0 1px;
  padding-left: 13px;
  border-radius: 3px 3px 0 0;
  background: #424242;
  color: #fff;
  font-size: 10px;
  line-height: 21px;
  a { color: #a6a7f0; font-weight: 700; }
`;
const Feed = styled.div`
  flex: 1;
  width: 796px;
  margin: 0 auto;
  padding-top: 8px;
  font-size: 10px;
  font-weight: 500;
  color: #616161;
`;
const FeedLine = styled.p`
  display: flex;
  align-items: center;
  gap: 11px;
  height: 25px;
  padding-left: ${(p) => (p.$indent ? 7 : 0)}px;
  color: ${(p) => (p.$indent ? "inherit" : "#252423")};
  font-weight: ${(p) => (p.$indent ? "inherit" : 600)};
`;
const Play = styled.span`
  margin-right: -8px;
  border: solid transparent;
  border-width: 4px 0 4px 4px;
  border-left-color: #484644;
`;
const Composer = styled.form`
  width: 729px;
  margin: 0 auto;
  padding-bottom: 6px;
`;
const ComposeInput = styled.input`
  && {
    display: block;
    width: 100%;
    height: 34px;
    padding: 0 12px;
    border: 1px solid #e1e1e1;
    border-radius: 3px;
    background: #fff;
    outline: 0;
  }
  &::placeholder { color: #616161; opacity: 1; }
`;
const ComposeRow = styled.div`
  display: flex;
  align-items: center;
  justify-content: space-between;
  height: 28px;
`;
const ComposeTools = styled.div`
  display: grid;
  grid-template-columns: repeat(9, 1fr);
  align-items: center;
  width: 231px;
`;

const App = () => (
  <Desktop>
    <Global />
    <Column>
      <Browser />
      <Outlook />
    </Column>
    <Column>
      <Panel>
        <Row $gap={6}>
          <Overview>概覽</Overview>
          <ChromeLogo size={13} />
          <span>Google Chrome</span>
          <Caret />
        </Row>
        <Clock>星期一 20：33</Clock>
        <Tray>
          <TeamsLogo size={18} />
          <ChromeLogo size={17} />
          <Svg viewBox="0 0 22 16" $s={17} style={{ stroke: "none" }}>
            <path fill="#e4e2dc" d="M0 1h22v14H0z" /><path stroke="#777" strokeWidth="2" strokeDasharray="1.500 1" strokeLinecap="butt" d="M2 4h18M2 7h18M2 10h18" />
          </Svg>
          <Row $gap={5}>zh<Caret /></Row>
          <Svg viewBox="0 0 16 16" $s={15} style={{ stroke: "none" }}>
            <path fill="#dfdbd2" d="M5.500 0h5v5h-5zM0 11h5v5H0zM11 11h5v5h-5z" /><path stroke="#dfdbd2" d="M8 5v3M2.500 11V8h11v3" />
          </Svg>
          <Svg viewBox="0 0 16 16" $s={15} style={{ stroke: "none" }}>
            <path fill="#dfdbd2" d="M0 5h3l4-4v13l-4-4H0z" /><path stroke="#8c897f" strokeWidth="1.200" d="M9 5v6M11 3v7M13.500 2v7" /><path stroke="#dfdbd2" strokeWidth="1.600" d="M11 11.500l4 4M15 11.500l-4 4" />
          </Svg>
          <Svg viewBox="0 0 16 16" $s={14} $w={2} $c="#dfdbd2"><path d="M4 3a6.500 6.500 0 1 0 8 0M8 1v6" /></Svg>
          <Caret />
        </Tray>
      </Panel>
      <Workspace>
        <Dock>
          <DockList>
            {dock.map(([name, n, active]) => (
              <DockItem key={name} $active={active} aria-label={name}>
                <Pips>{[...Array(n)].map((_, i) => <i key={i} />)}</Pips>
                {dockArt[name]}
              </DockItem>
            ))}
          </DockList>
          <AppsGrid aria-label="applications">{[...Array(9)].map((_, i) => <i key={i} />)}</AppsGrid>
        </Dock>
        <TeamsApp>
          <TeamsBar>
            <Arrows>
              <IconButton $w={23} aria-label="back"><Icon name="prev" size={11} /></IconButton>
              <IconButton $w={23} aria-label="forward"><Icon name="next" size={11} /></IconButton>
            </Arrows>
            <TeamsSearch><Icon name="searchR" size={12} /><input aria-label="搜尋" placeholder="搜尋" /></TeamsSearch>
            <WindowTools>
              <IconButton aria-label="more"><Icon name="dots" size={11} /></IconButton>
              <Status>ZS</Status>
              <IconButton $w={35} aria-label="minimize"><Icon name="minus" size={14} weight={1} /></IconButton>
              <IconButton $w={35} aria-label="restore"><Icon name="restore" size={14} /></IconButton>
              <IconButton $w={35} aria-label="close"><Icon name="close" size={15} /></IconButton>
            </WindowTools>
          </TeamsBar>
          <TeamsBody>
            <TeamsRail>
              {[["tbell", "活動"], ["tchat", "聊天"], ["teams", "團隊"], ["tcal", "行事曆"], ["phone", "通話"], ["tfile", "檔案"]].map(([n, l]) => (
                <RailItem key={n} href={"#" + n} $active={n === "tchat"}><Icon name={n} size={17} />{l}</RailItem>
              ))}
              <RailItem href="#more" $h={36}><Svg viewBox="0 0 16 16" $s={24}><path strokeWidth="1.400" d="M4.500 8h.01M8 8h.01M11.500 8h.01" /></Svg></RailItem>
              <RailRule />
              <Spacer />
              <RailItem href="#apps"><Icon name="apps" size={17} />應用程式</RailItem>
              <RailItem href="#help" $h={42}><Icon name="help" size={17} />說明</RailItem>
              <PhoneButton aria-label="mobile"><Icon name="mobile" size={18} /></PhoneButton>
            </TeamsRail>
            <ChatList>
              <ChatHead>
                <h2>聊天</h2><Icon name="chevron" size={11} color="#616161" />
                <Spacer />
                <Row $gap={13}><Icon name="filter" size={13} color="#484644" /><Icon name="compose" size={13} color="#484644" /></Row>
              </ChatHead>
              <Recent><Caret $s={3} />最近</Recent>
              <ChatCard href="#chat">
                <Disc $d={22} $bg="#6264a7"><Icon name="tcal" size={11} /></Disc>
                <div><h3>C3书籍内容和进展沟通</h3><p>使用者已新增</p></div>
                <time>下午8:03</time>
              </ChatCard>
            </ChatList>
            <Chat>
              <ChatBar>
                <Disc $d={26} $bg="#6264a7"><Icon name="tcal" /></Disc>
                <h1>C3书籍内容和进展沟通</h1>
                <ChatTab $active>聊天</ChatTab>
                <ChatTab>檔案</ChatTab>
                <ChatTab>會議記錄</ChatTab>
                <ChatTab>白板</ChatTab>
                <Icon name="plus" size={13} weight={1} color="#484644" />
                <JoinButton>加入</JoinButton>
                <Icon name="addPeople" size={16} />
                <b>6</b>
                <Icon name="list" size={14} />
              </ChatBar>
              <Notice>此會議聊天已停用通知。<a href="#settings">設定</a></Notice>
              <Feed>
                <FeedLine><Play /><Icon name="addPerson" size={14} />Zhang Tan 已將 Room-304-Addax (10 places) 和 其他 4 人 新增到聊天。</FeedLine>
                <FeedLine $indent><Icon name="pencil" size={14} />「Zhang Tan」已將會議命名為「C3书籍内容和进展沟通」。</FeedLine>
              </Feed>
              <Composer>
                <ComposeInput aria-label="輸入新訊息" placeholder="輸入新訊息" />
                <ComposeRow>
                  <ComposeTools>
                    {["format", "bang", "attach", "smile", "gif", "sticker", "stream", "loop", "dots"].map((n) => (
                      <SuiteButton type="button" key={n} aria-label={n}><Icon name={n} size={n === "dots" ? 11 : 14} /></SuiteButton>
                    ))}
                  </ComposeTools>
                  <IconButton type="submit" aria-label="send"><Icon name="sendT" size={15} /></IconButton>
                </ComposeRow>
              </Composer>
            </Chat>
          </TeamsBody>
        </TeamsApp>
      </Workspace>
    </Column>
  </Desktop>
);

export default App;
